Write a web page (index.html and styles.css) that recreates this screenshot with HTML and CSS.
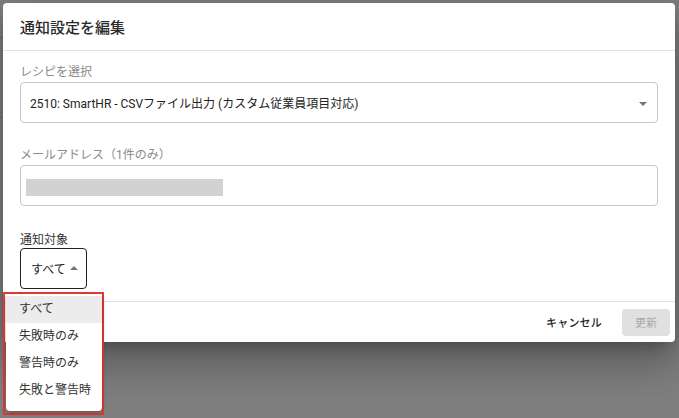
FILE: index.html
```html
<!DOCTYPE html>
<html lang="ja">
<head>
<meta charset="utf-8">
<link rel="stylesheet" href="styles.css">
</head>
<body>
<div class="backdrop">
  <div class="page-lines"></div>
  <div class="dialog">
    <div class="dialog-title">通知設定を編集</div>
    <div class="dialog-content">
      <div class="field">
        <div class="label">レシピを選択</div>
        <div class="box select-box">
          <span class="value">2510: SmartHR - CSVファイル出力 (カスタム従業員項目対応)</span>
          <span class="caret down"></span>
        </div>
      </div>
      <div class="field">
        <div class="label">メールアドレス（1件のみ）</div>
        <div class="box input-box">
          <span class="redact"></span>
        </div>
      </div>
      <div class="field field-tight">
        <div class="label dark">通知対象</div>
        <div class="box small-select">
          <span class="value">すべて</span>
          <span class="caret up"></span>
        </div>
      </div>
    </div>
    <div class="dialog-actions">
      <button class="btn-text">キャンセル</button>
      <button class="btn-disabled">更新</button>
    </div>
  </div>
  <div class="menu-frame">
    <ul class="menu">
      <li class="item selected">すべて</li>
      <li class="item">失敗時のみ</li>
      <li class="item">警告時のみ</li>
      <li class="item">失敗と警告時</li>
    </ul>
  </div>
</div>
</body>
</html>
```

FILE: styles.css
```css
* { box-sizing: border-box; }
html, body {
  margin: 0;
  padding: 0;
  width: 679px;
  height: 418px;
  overflow: hidden;
}
body {
  font-family: Roboto, "Noto Sans CJK JP", sans-serif;
  background: #7f7f7f;
  color: #212121;
}
.backdrop {
  position: relative;
  width: 679px;
  height: 418px;
  padding: 3px 4px 0 3px;
  background: #7f7f7f;
}
.page-lines {
  position: absolute;
  left: 0;
  top: 0;
  width: 3px;
  height: 418px;
  background: linear-gradient(#7f7f7f 37px, #707070 37px, #707070 38px, #7f7f7f 38px, #7f7f7f 117px, #707070 117px, #707070 118px, #7f7f7f 118px);
}
.dialog {
  position: relative;
  width: 672px;
  height: 339px;
  background: #fff;
  border-radius: 4px;
  box-shadow: 0 11px 15px -7px rgba(0,0,0,.25), 0 24px 38px 3px rgba(0,0,0,.16), 0 9px 46px 8px rgba(0,0,0,.12);
  display: flex;
  flex-direction: column;
}
.dialog-title {
  height: 48px;
  padding: 0 17px;
  display: flex;
  align-items: center;
  font-size: 15px;
  font-weight: 500;
  color: #2a2a2a;
  border-bottom: 1px solid #e0e0e0;
}
.dialog-content {
  flex: 1;
  padding: 13px 17px 0;
  display: flex;
  flex-direction: column;
  gap: 24px;
  border-bottom: 1px solid #e0e0e0;
}
.field {
  display: flex;
  flex-direction: column;
  gap: 2px;
}
.field-tight {
  gap: 0;
  margin-top: 2px;
}
.label {
  font-size: 12px;
  line-height: 16px;
  color: #8a8a8a;
}
.label.dark { color: #333; }
.box {
  height: 41px;
  border: 1px solid #c8c8c8;
  border-radius: 4px;
  display: flex;
  align-items: center;
}
.select-box {
  padding: 0 10px 0 9px;
  justify-content: space-between;
}
.value {
  font-size: 12px;
  color: #222;
  white-space: nowrap;
}
.caret {
  width: 0;
  height: 0;
  flex-shrink: 0;
  border-left: 4px solid transparent;
  border-right: 4px solid transparent;
}
.caret.down { border-top: 4px solid #757575; margin-top: 2px; }
.caret.up { border-bottom: 4px solid #757575; margin-bottom: 1px; }
.input-box {
  padding-left: 5px;
}
.redact {
  width: 197px;
  height: 17px;
  background: #d1d2d4;
  margin-top: 3px;
}
.small-select {
  border-color: #222;
  padding: 0 8px 0 10px;
  gap: 4px;
  align-self: flex-start;
}
.dialog-actions {
  height: 40px;
  display: flex;
  align-items: center;
  justify-content: flex-end;
  gap: 12px;
  padding-right: 5px;
}
.btn-text {
  font-family: inherit;
  font-size: 11px;
  font-weight: 500;
  color: #222;
  background: none;
  border: 0;
  padding: 0 8px;
  height: 27px;
  letter-spacing: 0.2px;
}
.btn-disabled {
  font-family: inherit;
  font-size: 11px;
  color: #aaa;
  background: #e0e0e0;
  border: 0;
  border-radius: 4px;
  width: 48px;
  height: 27px;
  padding: 0;
}
.menu-frame {
  position: absolute;
  left: 3px;
  top: 292px;
  width: 101px;
  height: 123px;
  border: 2px solid #e53935;
  padding: 0 0 0 1px;
}
.menu {
  list-style: none;
  margin: 0;
  padding: 2px 0 7px;
  height: 117px;
  background: #fff;
  border-radius: 4px;
  box-shadow: 0 2px 4px rgba(0,0,0,.3);
}
.item {
  height: 27px;
  line-height: 27px;
  padding-left: 13px;
  font-size: 12px;
  color: #333;
}
.item.selected { background: #ececec; }
```
